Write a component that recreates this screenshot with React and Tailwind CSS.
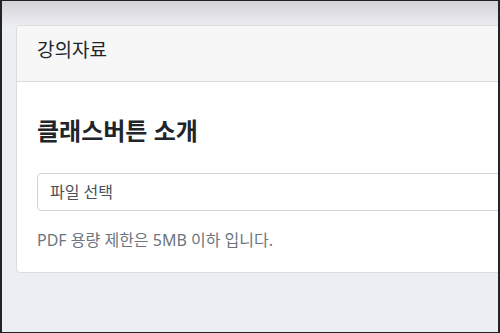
import React from "react";

const FONT = "font-['Noto_Sans','Noto_Sans_CJK_KR',sans-serif]";

export default function App() {
	return (
		<div
			className={`${FONT} h-[333px] w-[500px] overflow-hidden border-x-2 border-y border-[#232323] bg-[#edeef3] bg-[linear-gradient(to_bottom,#d2d2d7_0px,#edeef3_26px)]`}
		>
			<div className="ml-[14px] mt-[24px] w-[540px] overflow-hidden rounded-l-[4px] border border-[#dcdcdf] bg-white">
				{/* Card header */}
				<div className="h-[56px] border-b border-[#dcdcdf] bg-[#f7f7f7] pl-5 pt-[11px]">
					<span className="text-[19px] leading-[26px] text-[#212529]">강의자료</span>
				</div>

				{/* Card body */}
				<div className="px-5 pb-5 pt-[34px]">
					<h2 className="text-[24px] font-bold leading-[30px] text-[#212529]">
						클래스버튼 소개
					</h2>
					<div className="mt-[27px] flex h-[38px] items-center rounded-[4px] border border-[#ced4da] px-3">
						<span className="text-[16px] text-[#495057]">파일 선택</span>
					</div>
					<p className="mt-[17px] text-[16px] leading-[24px] text-[#6c757d]">
						PDF 용량 제한은 5MB 이하 입니다.
					</p>
				</div>
			</div>
		</div>
	);
}
